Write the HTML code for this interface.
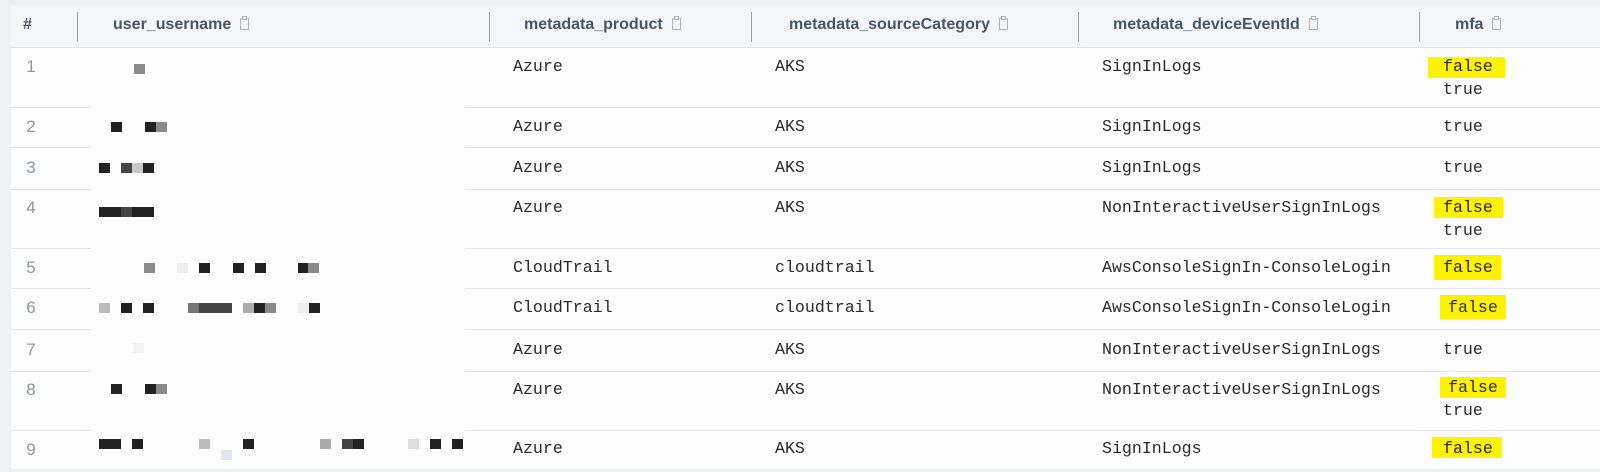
<!DOCTYPE html>
<html><head><meta charset="utf-8"><style>
body{margin:0;width:1600px;height:472px;background:#eef0f3;position:relative;overflow:hidden;font-family:"Liberation Sans",sans-serif}
.t{position:absolute;left:11px;top:5px;width:1589px;height:464px;background:#fdfdfd}
.hd{position:absolute;left:11px;top:5px;width:1589px;height:42px;background:#f4f6f9;border-bottom:1px solid #dfe3ea}
.h{position:absolute;top:16px;font-weight:bold;font-size:16px;color:#46566a;white-space:nowrap}
.dv{position:absolute;top:12px;width:1px;height:30px;background:#9aa3ad}
.ci{display:inline-block;width:7px;height:10px;border:1px solid #aab2bb;border-radius:1px;margin-left:9px;position:relative;top:1px}
.ci:before{content:"";position:absolute;left:1px;top:-3px;width:3px;height:2px;border:1px solid #aab2bb;background:#f4f6f9}
.ln{position:absolute;height:1px;background:#e1e5ec}
.n{position:absolute;left:23px;width:16px;text-align:center;font-size:17px;color:#8b95a3}
.m{position:absolute;font-family:"Liberation Mono",monospace;font-size:16.6px;color:#2a2a2a;white-space:nowrap;line-height:20px}
.y{position:absolute;background:#fff200}
.b{position:absolute;width:11px;height:10px}
</style></head><body>
<div class="t"></div>
<div class="hd"></div>
<div class="h" style="left:23px">#</div>
<div class="dv" style="left:77px"></div>
<div class="h" style="left:113px">user_username<span class="ci"></span></div>
<div class="dv" style="left:489px"></div>
<div class="h" style="left:524px">metadata_product<span class="ci"></span></div>
<div class="dv" style="left:751px"></div>
<div class="h" style="left:789px">metadata_sourceCategory<span class="ci"></span></div>
<div class="dv" style="left:1078px"></div>
<div class="h" style="left:1113px">metadata_deviceEventId<span class="ci"></span></div>
<div class="dv" style="left:1419px"></div>
<div class="h" style="left:1455px">mfa<span class="ci"></span></div>

<div class="ln" style="left:11px;width:80px;top:107px"></div><div class="ln" style="left:465px;width:1135px;top:107px"></div>
<div class="ln" style="left:11px;width:80px;top:147px"></div><div class="ln" style="left:465px;width:1135px;top:147px"></div>
<div class="ln" style="left:11px;width:80px;top:189px"></div><div class="ln" style="left:465px;width:1135px;top:189px"></div>
<div class="ln" style="left:11px;width:80px;top:248px"></div><div class="ln" style="left:465px;width:1135px;top:248px"></div>
<div class="ln" style="left:11px;width:80px;top:288px"></div><div class="ln" style="left:465px;width:1135px;top:288px"></div>
<div class="ln" style="left:11px;width:80px;top:329px"></div><div class="ln" style="left:465px;width:1135px;top:329px"></div>
<div class="ln" style="left:11px;width:80px;top:371px"></div><div class="ln" style="left:465px;width:1135px;top:371px"></div>
<div class="ln" style="left:11px;width:80px;top:430px"></div><div class="ln" style="left:465px;width:1135px;top:430px"></div>

<div class="n" style="top:57px">1</div><div class="n" style="top:117px">2</div><div class="n" style="top:158px">3</div>
<div class="n" style="top:198px">4</div><div class="n" style="top:258px">5</div><div class="n" style="top:298px">6</div>
<div class="n" style="top:340px">7</div><div class="n" style="top:380px">8</div><div class="n" style="top:440px">9</div>

<div class="y" style="left:1428px;top:57px;width:77px;height:21px"></div>
<div class="y" style="left:1434px;top:197px;width:69px;height:21px"></div>
<div class="y" style="left:1434px;top:255px;width:67px;height:25px"></div>
<div class="y" style="left:1440px;top:295px;width:66px;height:24px"></div>
<div class="y" style="left:1440px;top:377px;width:66px;height:21px"></div>
<div class="y" style="left:1432px;top:437px;width:70px;height:21px"></div>

<div class="m" style="left:513px;top:57px">Azure</div><div class="m" style="left:775px;top:57px">AKS</div><div class="m" style="left:1102px;top:57px">SignInLogs</div><div class="m" style="left:1443px;top:57px">false</div><div class="m" style="left:1443px;top:80px">true</div>
<div class="m" style="left:513px;top:117px">Azure</div><div class="m" style="left:775px;top:117px">AKS</div><div class="m" style="left:1102px;top:117px">SignInLogs</div><div class="m" style="left:1443px;top:117px">true</div>
<div class="m" style="left:513px;top:158px">Azure</div><div class="m" style="left:775px;top:158px">AKS</div><div class="m" style="left:1102px;top:158px">SignInLogs</div><div class="m" style="left:1443px;top:158px">true</div>
<div class="m" style="left:513px;top:198px">Azure</div><div class="m" style="left:775px;top:198px">AKS</div><div class="m" style="left:1102px;top:198px">NonInteractiveUserSignInLogs</div><div class="m" style="left:1443px;top:198px">false</div><div class="m" style="left:1443px;top:221px">true</div>
<div class="m" style="left:513px;top:258px">CloudTrail</div><div class="m" style="left:775px;top:258px">cloudtrail</div><div class="m" style="left:1102px;top:258px">AwsConsoleSignIn-ConsoleLogin</div><div class="m" style="left:1443px;top:258px">false</div>
<div class="m" style="left:513px;top:298px">CloudTrail</div><div class="m" style="left:775px;top:298px">cloudtrail</div><div class="m" style="left:1102px;top:298px">AwsConsoleSignIn-ConsoleLogin</div><div class="m" style="left:1448px;top:298px">false</div>
<div class="m" style="left:513px;top:340px">Azure</div><div class="m" style="left:775px;top:340px">AKS</div><div class="m" style="left:1102px;top:340px">NonInteractiveUserSignInLogs</div><div class="m" style="left:1443px;top:340px">true</div>
<div class="m" style="left:513px;top:380px">Azure</div><div class="m" style="left:775px;top:380px">AKS</div><div class="m" style="left:1102px;top:380px">NonInteractiveUserSignInLogs</div><div class="m" style="left:1448px;top:378px">false</div><div class="m" style="left:1443px;top:401px">true</div>
<div class="m" style="left:513px;top:439px">Azure</div><div class="m" style="left:775px;top:439px">AKS</div><div class="m" style="left:1102px;top:439px">SignInLogs</div><div class="m" style="left:1443px;top:439px">false</div>

<div class="b" style="left:134px;top:64px;background:#8a8a8a"></div>
<div class="b" style="left:111px;top:122px;background:#222"></div><div class="b" style="left:145px;top:122px;background:#222"></div><div class="b" style="left:156px;top:122px;background:#8a8a8a"></div>
<div class="b" style="left:99px;top:163px;background:#222"></div><div class="b" style="left:121px;top:163px;background:#444"></div><div class="b" style="left:132px;top:163px;background:#c8c8c8"></div><div class="b" style="left:143px;top:163px;background:#222"></div>
<div style="position:absolute;left:99px;top:207px;width:55px;height:10px;background:#222"></div><div class="b" style="left:121px;top:207px;background:#444"></div>
<div class="b" style="left:144px;top:263px;background:#8a8a8a"></div><div class="b" style="left:177px;top:263px;background:#eeeef4"></div><div class="b" style="left:199px;top:263px;background:#222"></div><div class="b" style="left:233px;top:263px;background:#222"></div><div class="b" style="left:255px;top:263px;background:#222"></div><div class="b" style="left:298px;top:263px;background:#222"></div><div class="b" style="left:308px;top:263px;background:#8a8a8a"></div>
<div class="b" style="left:99px;top:303px;background:#bbb"></div><div class="b" style="left:121px;top:303px;background:#222"></div><div class="b" style="left:143px;top:303px;background:#222"></div><div class="b" style="left:188px;top:303px;background:#777"></div><div style="position:absolute;left:199px;top:303px;width:33px;height:10px;background:#444"></div><div class="b" style="left:243px;top:303px;background:#aaa"></div><div class="b" style="left:254px;top:303px;background:#222"></div><div class="b" style="left:265px;top:303px;background:#888"></div><div class="b" style="left:298px;top:303px;background:#eeeef4"></div><div class="b" style="left:309px;top:303px;background:#222"></div>
<div class="b" style="left:133px;top:343px;background:#f2f3f6"></div>
<div class="b" style="left:111px;top:384px;background:#222"></div><div class="b" style="left:145px;top:384px;background:#222"></div><div class="b" style="left:156px;top:384px;background:#8a8a8a"></div>
<div style="position:absolute;left:99px;top:439px;width:22px;height:10px;background:#222"></div><div class="b" style="left:132px;top:439px;background:#222"></div><div class="b" style="left:199px;top:439px;background:#bbb"></div><div class="b" style="left:221px;top:450px;background:#e4e6ee"></div><div class="b" style="left:243px;top:439px;background:#222"></div><div class="b" style="left:320px;top:439px;background:#aaa"></div><div style="position:absolute;left:342px;top:439px;width:22px;height:10px;background:#222"></div><div class="b" style="left:342px;top:439px;background:#444"></div><div class="b" style="left:408px;top:439px;background:#ddd"></div><div class="b" style="left:430px;top:439px;background:#222"></div><div class="b" style="left:452px;top:439px;background:#222"></div>
</body></html>
